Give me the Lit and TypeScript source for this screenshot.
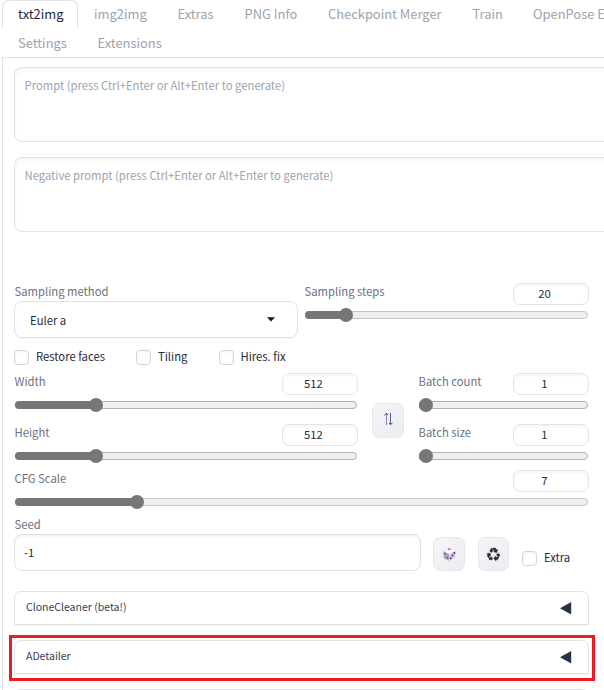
import { LitElement, html, css } from "lit";
import { customElement, property } from "lit/decorators.js";
import { styleMap } from "lit/directives/style-map.js";

const diceIcon = html`<svg width="15" height="15" viewBox="0 0 15 15">
  <path d="M1 3.8 7 7 7.2 13.8 2 11.6Z" fill="#a9a2ba" />
  <path d="M7 7 14 3.4 13 10.4 7.2 13.8Z" fill="#d3cce4" />
  <path d="M1 3.8 7.4 1.6 14 3.4 7 7Z" fill="#f7f6fa" />
  <ellipse cx="7.3" cy="2.2" rx="1.6" ry="0.9" fill="#f0646c" />
  <g fill="#4c3b74">
    <circle cx="3.1" cy="6.8" r="0.8" /><circle cx="5.4" cy="10.8" r="0.8" />
    <circle cx="8.7" cy="11.2" r="1" /><circle cx="10.5" cy="8.6" r="1" /><circle cx="12.3" cy="6" r="1" />
  </g>
</svg>`;

const recycleIcon = html`<svg width="15" height="15" viewBox="0 1 24 23">
  <path fill="#262b36" stroke="#262b36" stroke-width="0.5" d="M5.77 7.15 7.2 4.78l1.03-1.71c.39-.65 1.33-.65 1.72 0l1.48 2.46-1.23 2.06-1 1.62-3.43-2.06zm15.95 5.82-1.6-2.66-3.46 2L18.87 16H20c.76 0 1.45-.43 1.79-1.11.14-.28.21-.58.21-.89 0-.36-.1-.71-.28-1.03zM16 21h1.5c.76 0 1.45-.43 1.79-1.11L20.74 17H16v-2l-4 4 4 4v-2zm-6-4H5.7l-.84 1.41c-.3.5-.32 1.12-.06 1.65.28.57.87.94 1.52.94H10v-4zm-3.88-2.65 1.73 1.04L6.48 9.9 1 11.27l1.7 1.02-.41.69c-.35.59-.38 1.31-.07 1.92l1.63 3.26 2.27-3.81zm10.9-9.21-1.3-2.17C15.35 2.37 14.7 2 14 2h-3.53l3.12 5.2-1.72 1.03 5.49 1.37 1.37-5.49-1.71 1.03z" />
</svg>`;

const swapIcon = html`<svg class="updown" width="10" height="14" viewBox="0 0 10 14" fill="none" stroke-width="1">
  <path d="M3.5 13V2" stroke="#8088e8" /><path d="M1.5 3.4 3.5 1.2 5 3" stroke="#3d4454" />
  <path d="M7.5 1V12" stroke="#5a6174" /><path d="M6 11 7.5 12.8 9.4 10.8" stroke="#3d4454" />
</svg>`;

@customElement("range-field")
class RangeField extends LitElement {
  @property() label = "";
  @property() value = "";
  @property({ type: Number }) thumb = 7;
  @property({ type: Boolean }) soft = false;

  static styles = css`
    :host { display: flex; flex-direction: column; height: 37px; }
    .head { display: flex; justify-content: space-between; height: 22px; }
    .label { padding-left: 0.5px; line-height: 17px; color: #6b7280; white-space: nowrap; }
    .num {
      box-sizing: border-box; width: 76px; height: 22px; border: 1px solid #e3e4e8; border-radius: 7px;
      padding-right: 13px; text-align: center; line-height: 19px; color: #1f2937;
      box-shadow: inset 0 2px 3px rgba(0, 0, 0, 0.04);
    }
    .track {
      position: relative; box-sizing: border-box; height: 8px; margin: 6px 1px 0 1px;
      border: 1px solid #b2b2b2; border-radius: 4px; background: #efefef;
    }
    .track.soft { border-color: #c6c6c6; }
    .fill { position: absolute; left: -1px; top: -1px; height: 8px; border-radius: 4px; background: #767676; }
    .thumb {
      position: absolute; top: -4px; width: 14px; height: 14px; margin-left: -8px;
      border-radius: 50%; background: #767676;
    }
  `;

  render() {
    return html`
      <div class="head"><span class="label">${this.label}</span><span class="num">${this.value}</span></div>
      <div class="track ${this.soft ? "soft" : ""}">
        <div class="fill" style=${styleMap({ width: `${this.thumb}px` })}></div>
        <div class="thumb" style=${styleMap({ left: `${this.thumb}px` })}></div>
      </div>`;
  }
}

@customElement("check-field")
class CheckField extends LitElement {
  @property() label = "";
  static styles = css`
    :host { display: flex; gap: 7px; height: 15px; color: #1f2937; white-space: nowrap; }
    .box {
      box-sizing: border-box; width: 15px; height: 15px; border: 1px solid #d1d3d8; border-radius: 3.5px;
      box-shadow: inset 0 1px 3px rgba(0, 0, 0, 0.06);
    }
    .text { line-height: 13px; }
  `;
  render() {
    return html`<span class="box"></span><span class="text">${this.label}</span>`;
  }
}

@customElement("fold-panel")
class FoldPanel extends LitElement {
  @property() label = "";
  static styles = css`
    :host {
      box-sizing: border-box; display: flex; align-items: center; justify-content: space-between;
      height: 34px; padding: 0 16px 0 11px; border: 1px solid #dfe1e5; border-radius: 7px 7px 1px 1px;
      color: #374151; box-shadow: 0 1px 1px rgba(0, 0, 0, 0.04);
    }
    .text { height: 32px; font-size: var(--fold-size); line-height: 29px; }
    .arrow { display: block; }
  `;
  render() {
    return html`<span class="text">${this.label}</span>
      <svg class="arrow" width="12" height="13" viewBox="0 0 12 13"><path d="M0 6.2 11.2 0V12.4Z" fill="#273247" /></svg>`;
  }
}

@customElement("app-root")
class AppRoot extends LitElement {
  static styles = css`
    :host {
      --fold-size: 10.5px;
      display: block; width: 604px; height: 690px; overflow: hidden; background: #fff;
      font-family: "Noto Sans CJK SC", "Noto Sans CJK JP", sans-serif; font-size: 11.28px;
    }
    .tabs { display: flex; flex-direction: column; margin-left: 2px; height: 57px; font-size: 12.9px; color: #9ca3af; }
    .tabrow { display: flex; height: 29px; white-space: nowrap; }
    .tab { box-sizing: border-box; flex: none; height: 29px; padding: 0 16px; line-height: 27px; text-align: left; }
    .active {
      border: 1px solid #dfe1e5; border-bottom: 0; border-radius: 7px 7px 0 0; color: #1f2937;
      padding: 0 15px; line-height: 25px;
    }
    .w1 { width: 76px; } .w2 { width: 83.5px; } .w3 { width: 67px; } .w4 { width: 83.5px; }
    .w5 { width: 144.5px; } .w6 { width: 60.5px; } .w7 { width: 89px; padding-right: 0; } .w8 { width: 79.5px; }
    .panel {
      box-sizing: border-box; height: 640px; margin-left: 2px; padding: 9px 0 0 11px;
      border: 1px solid #dfe1e5; border-right: 0;
    }
    .prompt {
      box-sizing: border-box; width: 620px; height: 75px; margin-bottom: 15px; padding: 7px 9.5px;
      border: 1px solid #dfe1e5; border-radius: 8px; color: #9ca3af; line-height: 20px;
      box-shadow: inset 0 2px 4px rgba(0, 0, 0, 0.05);
    }
    .settings { width: 575px; margin-top: 51px; display: flex; flex-direction: column; }
    .row { display: flex; }
    .sampling { gap: 6px; height: 55px; }
    .method { width: 284px; }
    .steps { width: 285px; }
    .label { display: block; height: 18px; padding-left: 0.5px; line-height: 17px; color: #6b7280; }
    .select {
      box-sizing: border-box; height: 37px; padding: 0 21px 0 15px; border: 1px solid #dfe1e5; border-radius: 8px;
      display: flex; align-items: center; justify-content: space-between; color: #1f2937;
      box-shadow: 0 1px 2px rgba(0, 0, 0, 0.03);
    }
    .caret { display: block; }
    .checks { margin-top: 12px; height: 15px; }
    .c1 { width: 122px; } .c2 { width: 82.5px; }
    .sizes { margin-top: 8px; height: 97px; }
    .dims { width: 344px; display: flex; flex-direction: column; gap: 13.5px; }
    .batch { width: 171px; display: flex; flex-direction: column; gap: 13.5px; }
    .tool {
      box-sizing: border-box; display: flex; align-items: center; justify-content: center; flex: none;
      width: 32px; height: 34px; border: 1px solid #e6e7eb; border-radius: 7px;
      background: linear-gradient(135deg, #f6f6f9, #ececf1);
    }
    .swap { margin: 30px 14px 0; height: 35px; }
    .updown { margin-bottom: 3px; }
    .seedlabel { margin-top: 9px; }
    .seedrow { height: 38px; }
    .seed {
      box-sizing: border-box; width: 407px; height: 37px; padding: 0 9px; line-height: 35px; color: #1f2937;
      border: 1px solid #dfe1e5; border-radius: 8px; box-shadow: inset 0 2px 3px rgba(0, 0, 0, 0.05);
    }
    .dice { margin: 3px 13px 0 12px; }
    .reuse { width: 31px; margin: 3px 13px 0 0; }
    .extra { margin-top: 17px; }
    .folds { margin-top: 19px; display: flex; flex-direction: column; gap: 15px; }
    .marked { position: relative; }
    .marker { position: absolute; left: -5px; top: -5px; width: 580px; height: 40px; border: 3px solid #ed1c24; }
  `;

  render() {
    return html`
      <div class="tabs">
        <div class="tabrow">
          <div class="tab active w1">txt2img</div><div class="tab w2">img2img</div><div class="tab w3">Extras</div>
          <div class="tab w4">PNG Info</div><div class="tab w5">Checkpoint Merger</div><div class="tab w6">Train</div>
          <div class="tab w7">OpenPose E</div>
        </div>
        <div class="tabrow"><div class="tab w8">Settings</div><div class="tab">Extensions</div></div>
      </div>
      <div class="panel">
        <div class="prompt">Prompt (press Ctrl+Enter or Alt+Enter to generate)</div>
        <div class="prompt">Negative prompt (press Ctrl+Enter or Alt+Enter to generate)</div>
        <div class="settings">
          <div class="row sampling">
            <div class="method">
              <span class="label">Sampling method</span>
              <div class="select"><span>Euler a</span>
                <svg class="caret" width="10" height="5" viewBox="0 0 10 5"><path d="M1 .3h8L5 4.6Z" fill="#111827" /></svg>
              </div>
            </div>
            <range-field class="steps" label="Sampling steps" value="20" .thumb=${41} soft></range-field>
          </div>
          <div class="row checks">
            <check-field class="c1" label="Restore faces"></check-field>
            <check-field class="c2" label="Tiling"></check-field>
            <check-field label="Hires. fix"></check-field>
          </div>
          <div class="row sizes">
            <div class="dims">
              <range-field label="Width" value="512" .thumb=${81}></range-field>
              <range-field label="Height" value="512" .thumb=${81}></range-field>
            </div>
            <div class="tool swap">${swapIcon}</div>
            <div class="batch">
              <range-field label="Batch count" value="1" .thumb=${7}></range-field>
              <range-field label="Batch size" value="1" .thumb=${7}></range-field>
            </div>
          </div>
          <range-field label="CFG Scale" value="7" .thumb=${122} soft></range-field>
          <span class="label seedlabel">Seed</span>
          <div class="row seedrow">
            <div class="seed">-1</div>
            <div class="tool dice">${diceIcon}</div>
            <div class="tool reuse">${recycleIcon}</div>
            <check-field class="extra" label="Extra"></check-field>
          </div>
          <div class="folds">
            <fold-panel label="CloneCleaner (beta!)"></fold-panel>
            <div class="marked"><fold-panel label="ADetailer"></fold-panel><div class="marker"></div></div>
            <fold-panel></fold-panel>
          </div>
        </div>
      </div>`;
  }
}
